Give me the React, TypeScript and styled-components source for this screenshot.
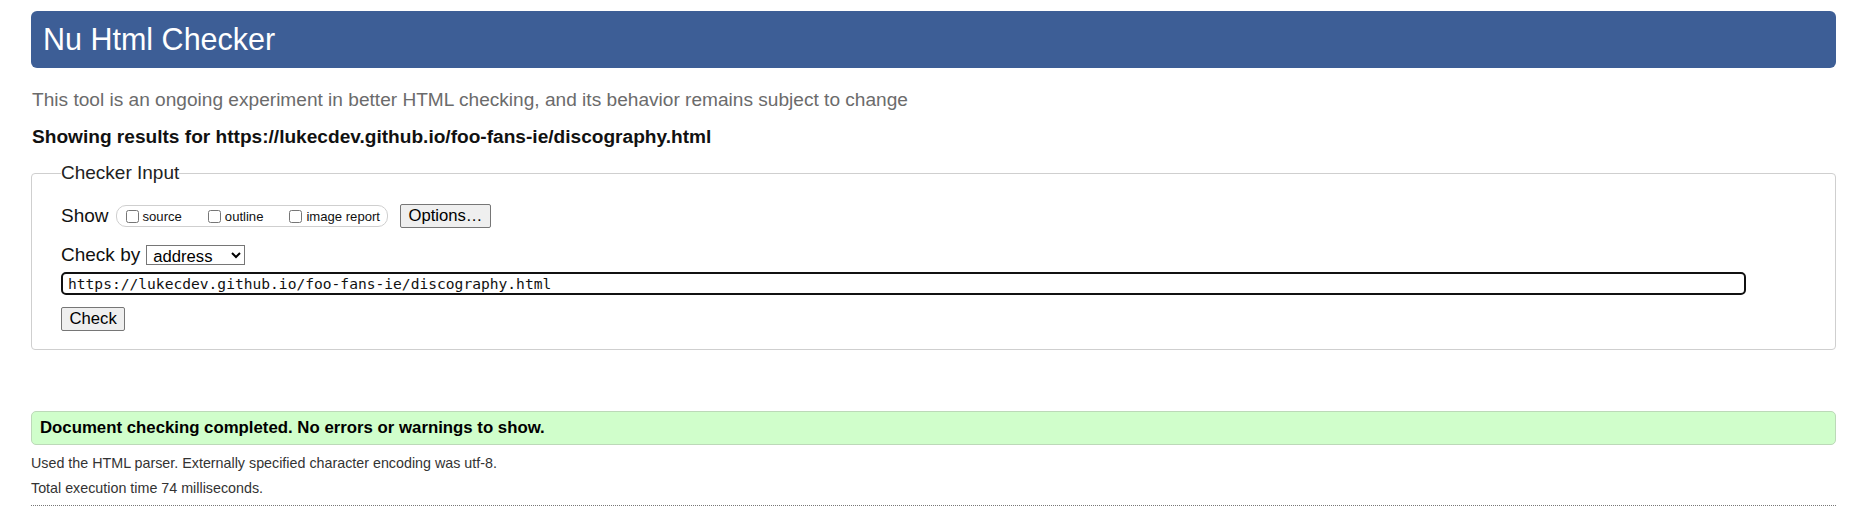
import React from "react";
import styled, { createGlobalStyle } from "styled-components";

const Global = createGlobalStyle`
  html, body { margin: 0; padding: 0; background: #fff; }
  body { font-family: "Liberation Sans", Arial, Helvetica, sans-serif; color: #111; }
`;

const Page = styled.div`
  padding: 11px 33px 0 31px;
`;

const Header = styled.header`
  height: 57px;
  background: #3d5e96;
  border-radius: 6px;
  padding-left: 12px;
  display: flex;
  align-items: center;
`;

const Title = styled.h1`
  margin: 0;
  font-weight: normal;
  font-size: 30.5px;
  line-height: 57px;
  color: #fff;
`;

const Intro = styled.p`
  margin: 20px 0 0 1px;
  font-size: 19.1px;
  line-height: 24px;
  color: #6b6b6b;
`;

const ResultsFor = styled.p`
  margin: 13px 0 0 1px;
  font-size: 19.1px;
  line-height: 24px;
  font-weight: bold;
  color: #111;
`;

const Form = styled.fieldset`
  margin: 13px 0 0;
  padding: 19px 29px 18px 29px;
  border: 1px solid #cfcfcf;
  border-radius: 4px;
  min-width: 0;
`;

const Legend = styled.legend`
  padding: 0 0 1px;
  font-size: 19px;
  line-height: 22px;
  color: #222;
`;

const Row = styled.div<{ $top?: number }>`
  display: flex;
  align-items: center;
  gap: 7px;
  margin-top: ${(p) => p.$top ?? 0}px;
  height: 24px;
`;

const RowLabel = styled.span`
  font-size: 19px;
  line-height: 24px;
  color: #111;
`;

const OptionGroup = styled.span`
  display: inline-flex;
  align-items: center;
  gap: 26px;
  height: 20px;
  padding: 0 7px 0 9px;
  border: 1px solid #cfcfcf;
  border-radius: 10px;
  margin-right: 5px;
`;

const Option = styled.label`
  display: inline-flex;
  align-items: center;
  gap: 4px;
  font-size: 13.1px;
  color: #111;
`;

const Box = styled.input`
  margin: 0;
  width: 13px;
  height: 13px;
`;

const Button = styled.button`
  font-family: "Liberation Sans", Arial, sans-serif;
  font-size: 16.67px;
  line-height: 20px;
  padding: 1px 7.5px;
  border: 1px solid #767676;
  border-radius: 2px;
  background: #efefef;
  color: #000;
`;

const Select = styled.select`
  font-family: "Liberation Sans", Arial, sans-serif;
  font-size: 16.67px;
  width: 99px;
  height: 20px;
  padding: 0 0 0 2px;
  margin-left: -1px;
  border: 1px solid #767676;
  border-radius: 0;
  background: #fff;
  color: #000;
`;

const UrlInput = styled.input`
  display: block;
  box-sizing: border-box;
  margin-top: 5px;
  width: calc(100% - 60px);
  height: 23px;
  padding: 0 5px;
  border: 2px solid #111;
  border-radius: 5px;
  font-family: "DejaVu Sans Mono", "Liberation Mono", monospace;
  font-size: 14.6px;
  color: #111;
  outline: none;
`;

const SubmitRow = styled.div`
  margin-top: 12px;
  display: flex;
`;

const Success = styled.p`
  margin: 61px 0 0;
  height: 32px;
  padding: 0 8px;
  border: 1px solid #bcd9b8;
  border-radius: 5px;
  background: #d0fecb;
  font-size: 16.8px;
  line-height: 32px;
  font-weight: bold;
  color: #000;
`;

const Details = styled.p<{ $top: number }>`
  margin: ${(p) => p.$top}px 0 0;
  font-size: 14.3px;
  line-height: 24.7px;
  color: #333;
`;

const Rule = styled.hr`
  margin: 5px 0 0;
  border: 0;
  border-top: 1px dotted #777;
  height: 0;
`;

export default function App() {
  return (
    <>
      <Global />
      <Page>
        <Header>
          <Title>Nu Html Checker</Title>
        </Header>
        <Intro>
          This tool is an ongoing experiment in better HTML checking, and its behavior remains subject to change
        </Intro>
        <ResultsFor>Showing results for https://lukecdev.github.io/foo-fans-ie/discography.html</ResultsFor>
        <Form>
          <Legend>Checker Input</Legend>
          <Row>
            <RowLabel>Show</RowLabel>
            <OptionGroup>
              <Option>
                <Box type="checkbox" />
                source
              </Option>
              <Option>
                <Box type="checkbox" />
                outline
              </Option>
              <Option>
                <Box type="checkbox" />
                image report
              </Option>
            </OptionGroup>
            <Button type="button">Options…</Button>
          </Row>
          <Row $top={15}>
            <RowLabel>Check by</RowLabel>
            <Select defaultValue="address">
              <option value="address">address</option>
              <option value="file">file upload</option>
              <option value="text">text input</option>
            </Select>
          </Row>
          <UrlInput type="url" defaultValue="https://lukecdev.github.io/foo-fans-ie/discography.html" />
          <SubmitRow>
            <Button type="submit">Check</Button>
          </SubmitRow>
        </Form>
        <Success>Document checking completed. No errors or warnings to show.</Success>
        <Details $top={6}>Used the HTML parser. Externally specified character encoding was utf-8.</Details>
        <Details $top={0}>Total execution time 74 milliseconds.</Details>
        <Rule />
      </Page>
    </>
  );
}
